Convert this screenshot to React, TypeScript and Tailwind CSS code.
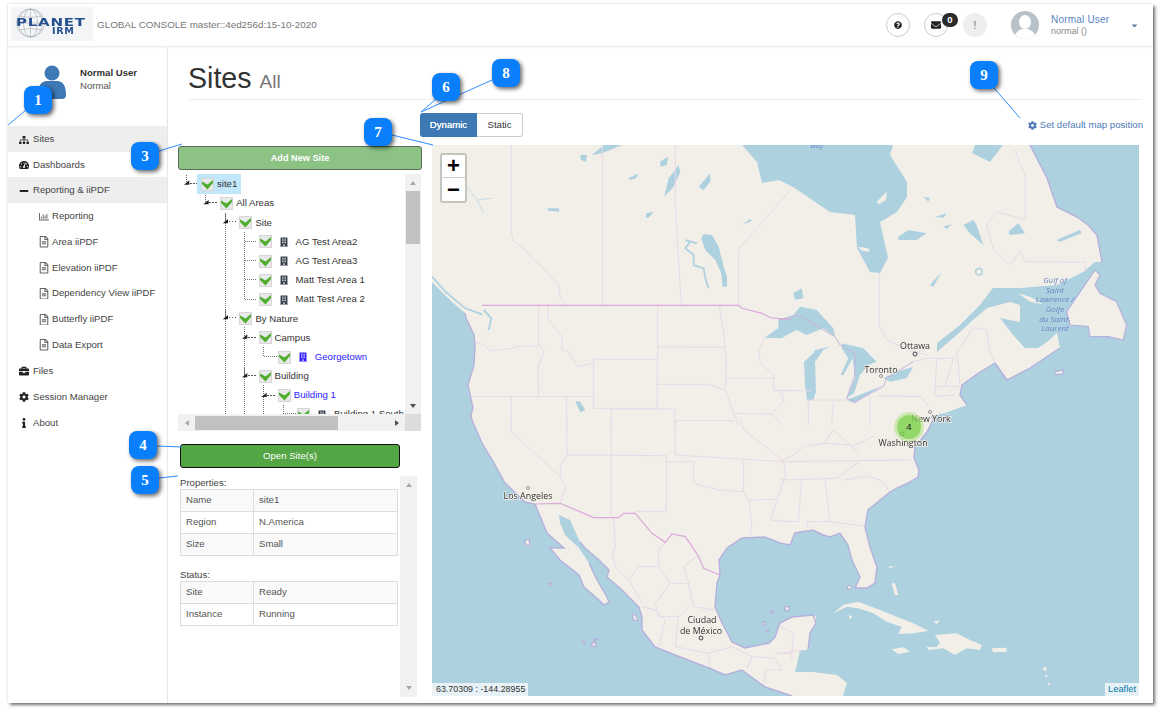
import React from "react";
import {
  FaBriefcase,
  FaBuilding,
  FaCaretDown,
  FaCog,
  FaEnvelope,
  FaInfo,
  FaMinus,
  FaQuestionCircle,
  FaRegChartBar,
  FaRegFileAlt,
  FaSitemap,
  FaTachometerAlt,
} from "react-icons/fa";

const LAND =
  "M432,145 L742,145 L757,162 L762,183 L779,180 L793,187 L830,212 L855,215 L857,248 L870,272 L880,273 L888,258 L880,222 L897,212 L907,197 L907,182 L890,155 L893,145 L975,145 L972,153 L990,162 L1003,145 L1030,145 L1047,178 L1057,207 L1077,217 L1088,225 L1097,235 L1102,262 L1095,262 L1083,272 L1057,285 L1020,288 L993,288 L980,305 L960,325 L937,343 L937,352 L960,332 L973,320 L987,308 L1010,302 L1020,305 L1020,322 L1000,318 L1013,335 L1025,348 L1038,348 L1047,342 L1057,333 L1060,348 L1030,368 L1007,380 L995,363 L980,372 L962,385 L960,395 L967,405 L945,413 L930,416 L933,420 L927,432 L915,447 L914,458 L919,470 L918,477 L908,483 L897,488 L890,492 L868,510 L865,527 L870,547 L877,567 L875,583 L867,588 L855,588 L860,577 L852,560 L848,545 L840,533 L830,537 L823,535 L813,530 L795,533 L790,545 L780,543 L765,537 L742,538 L727,548 L719,560 L720,575 L717,583 L715,607 L722,623 L732,642 L745,648 L769,643 L775,637 L780,623 L792,617 L800,616 L813,615 L816,617 L816,623 L810,633 L808,650 L800,650 L798,660 L795,672 L813,672 L837,675 L847,683 L843,696 L792,696 L765,687 L742,670 L725,675 L709,668 L675,655 L655,647 L642,630 L642,617 L639,607 L622,590 L607,577 L609,570 L599,560 L585,548 L580,542 L570,520 L559,515 L560,523 L565,535 L579,548 L589,563 L597,580 L607,597 L609,602 L604,605 L599,600 L584,587 L579,575 L560,560 L550,548 L564,548 L547,533 L535,504 L525,502 L505,483 L494,463 L482,443 L472,420 L471,415 L473,408 L468,385 L474,365 L475,345 L474,335 L466,318 L465,313 L452,302 L442,292 L432,282 Z";

const COAST =
  "M1102,262 L1097,235 L1088,225 L1077,217 L1057,207 L1047,178 L1030,145 M995,363 L1007,380 L1030,368 L1060,348 M995,363 L980,372 L962,385 L960,395 L967,405 M933,420 L927,432 L915,447 L914,458 L919,470 L918,477 L908,483 L897,488 L890,492 L868,510 L865,527 L870,547 L877,567 L875,583 L867,588 L855,588 L860,577 L852,560 L848,545 L840,533 L830,537 L823,535 L813,530 L795,533 L790,545 L780,543 L765,537 L742,538 L727,548 L719,560 L720,575 L717,583 L715,607 L722,623 L732,642 L745,648 L769,643 L775,637 L780,623 L792,617 L813,615 L816,623 L810,633 L808,650 M792,696 L765,687 L742,670 L725,675 L709,668 L675,655 L655,647 L642,630 L642,617 L639,607 L622,590 L607,577 L609,570 L599,560 L585,548 L580,542 M589,563 L597,580 L607,597 L609,602 L604,605 L599,600 L584,587 L579,575 L560,560 L550,548 L564,548 L547,533 L535,504 L525,502 L505,483 L494,463 L482,443 L472,420 L471,415 L473,408 L468,385 L474,365 L475,345 L474,335 L466,318 L465,313";

// lakes and inlets, traced in zoomed coordinates (3x) per map quadrant
const LAKES_NW = [
  "M480,30 L515,0 L570,0 L510,25 Z",
  "M445,30 L465,30 L462,50 L447,45 Z",
  "M685,50 L708,35 L705,60 L685,65 Z",
  "M710,100 L740,60 L745,80 L725,125 L697,155 Z",
  "M590,100 L620,85 L612,100 L592,105 Z",
  "M800,125 L835,85 L835,110 L815,135 Z",
  "M345,190 L380,190 L382,200 L350,197 Z",
  "M642,205 L665,200 L650,218 L642,218 Z",
  "M928,240 L955,222 L960,228 Z",
  "M808,280 L815,268 L840,270 L860,305 L878,375 L885,395 L885,425 L872,425 L868,385 L850,345 L820,315 Z",
  "M998,578 L1045,545 L1080,520 L1080,560 L1050,580 Z",
  "M430,768 L445,770 L460,795 L445,802 Z",
];

const THIN_WATER = [
  "M760,285 L795,295 M775,290 L760,310 L785,330 L785,360 L815,370 L820,400 L830,430",
  "M0,395 L40,440 L100,490 L150,508",
  "M155,495 L178,520 L170,555",
];

const LAKES_NE = [
  "M-5,525 L40,510 L60,485 L110,495 L160,550 L165,575 L130,550 L80,570 L50,555 L-5,580 Z",
  "M72,650 L100,625 L105,615 L150,605 L130,615 L105,650 L108,740 L100,765 L82,768 L75,720 Z",
  "M185,595 L250,610 L290,650 L265,660 L240,690 L222,745 L200,758 L225,700 L218,640 L190,690 L182,690 L205,640 L185,610 Z",
  "M200,765 L300,725 L310,720 L225,775 Z",
  "M310,700 L350,680 L400,665 L380,700 L330,710 Z",
  "M355,275 L385,255 L440,265 L410,285 L355,285 Z",
  "M465,215 L500,205 L490,218 Z",
  "M490,245 L515,238 L500,252 Z",
  "M550,240 L580,225 L590,240 L610,300 L570,265 Z",
  "M685,260 L715,235 L735,265 L690,270 Z",
  "M830,285 L900,255 L905,265 L840,290 Z",
  "M450,420 L485,380 L460,425 Z",
  "M430,155 L450,160 L445,170 Z",
  "M40,445 L65,430 L70,460 L45,465 Z",
];

const BORDERS_NW = [
  "M238,0 L238,260 L245,288 L285,320 L300,340 L330,365 L380,420 L385,455 L400,480",
  "M511,0 L511,480",
  "M730,0 L730,180 L748,480",
  "M920,480 L920,312 L1080,130",
  "M320,483 L320,603",
  "M130,592 L160,600 L175,618 L240,610 L265,603 L325,603 L335,620 L318,668 L320,755",
  "M347,483 L347,520 L390,575 L390,615 L410,620 L435,665 L485,655",
  "M120,755 L485,755",
  "M485,643 L675,643 L675,790 L485,790 L485,643",
  "M677,483 L677,643",
  "M677,605 L878,607",
  "M862,483 L878,580 L878,607 L883,640 L880,730",
  "M677,718 L830,718 L880,735 L905,805 L920,840",
  "M880,700 L1025,700",
  "M538,792 L728,792 L728,840",
  "M404,755 L404,840",
  "M238,755 L238,840",
  "M538,792 L538,840",
  "M730,827 L905,827",
  "M905,805 L1020,808",
  "M1000,575 L980,620 L985,655 L1025,690 L1025,735 L1050,745 L1055,770 L1020,805 L1050,840",
  "M1030,735 L1080,737",
];

const BORDERS_NE = [
  "M298,385 L298,540 L320,585 L400,620 L440,630",
  "M705,15 L735,90 L735,225 L650,200 L620,240 L640,310 L690,360 L720,320 L735,350 L915,352 L915,380",
  "M295,752 L425,755 L445,785",
  "M85,770 L85,840",
  "M160,770 L155,840",
  "M0,737 L95,737",
  "M85,765 L205,765",
  "M270,750 L270,840",
  "M470,640 L465,755",
  "M520,640 L495,725",
  "M533,630 L540,720",
  "M465,725 L540,725",
  "M465,755 L525,750",
  "M400,650 L440,640 L520,640 L580,548 L620,555 L630,620 L645,650",
];

const BORDERS_SW = [
  "M238,0 L238,35 L385,170",
  "M405,0 L405,105 L385,140 L385,170 L400,200 L385,250",
  "M405,105 L703,107 L703,275 L610,275",
  "M538,0 L538,290",
  "M730,0 L730,105 L1055,125 L1060,165 L1015,300 L1080,305",
  "M703,125 L785,125 L785,190 L860,210 L935,215 L950,240 L960,310 L955,345",
  "M935,125 L935,215",
  "M950,240 L1030,238",
  "M925,0 L935,30 L1060,125",
  "M545,295 L550,380 L540,405 L550,440 L590,480 L620,440 L680,440 L680,390 L700,367",
  "M590,480 L630,550",
  "M680,440 L715,490 L770,490 L755,440 L795,410",
  "M770,490 L785,560 L845,570",
  "M715,490 L670,550 L680,590 L740,590 L770,560",
  "M630,560 L670,570 L700,600 L680,680",
  "M740,590 L730,680 L830,700 L835,745",
  "M830,700 L900,680 L960,710 L945,745",
  "M960,710 L1030,715 L1050,750 L1000,750 L995,795",
  "M1030,700 L1080,700",
];

const BORDERS_SE = [
  "M0,125 L395,120",
  "M0,180 L170,175 L245,120",
  "M195,180 L260,168 L300,180 L330,215",
  "M135,178 L150,305",
  "M80,305 L150,305 L250,318",
  "M65,178 L55,305",
  "M80,305 L85,325",
  "M0,305 L55,305",
  "M0,125 L40,105 L70,80 L130,70 L160,30",
  "M130,70 L210,75 L235,95",
  "M160,30 L215,80 L280,50",
  "M0,620 L40,640 L35,720",
  "M0,700 L70,690",
];

const CARIBBEAN = [
  "M160,580 L190,555 L235,545 L300,570 L350,590 L400,610 L445,632 L400,640 L355,642 L365,620 L320,605 L280,580 L235,565 L200,560 Z",
  "M440,680 L470,682 L480,668 L465,645 L530,640 L570,660 L605,675 L600,690 L560,685 L525,705 L490,685 L445,690 Z",
  "M335,688 L370,682 L390,695 L355,702 Z",
  "M635,685 L680,683 L680,695 L640,697 Z",
  "M205,585 L218,590 L210,598 Z",
  "M335,490 L345,490 L355,525 L345,525 Z",
  "M325,440 L345,437 L330,445 Z",
  "M460,605 L480,600 L470,612 Z",
  "M787,745 L800,740 L798,755 Z",
  "M795,765 L802,765 L800,775 Z",
  "M802,788 L810,790 L808,800 Z",
];

const OUTLINED_ISLES = [
  "M280,360 L292,358 L293,375 L280,375 Z",
  "M352,490 L360,490 L358,497 L352,496 Z",
  "M600,583 L610,585 L618,600 L606,602 Z",
  "M452,663 L460,665 L458,672 L452,670 Z",
  "M480,668 L492,668 L490,680 L480,678 Z",
  "M484,658 L496,656 L488,664 Z",
  "M995,605 L1002,610 L998,618 L992,612 Z",
  "M1060,560 L1070,560 L1072,570 L1060,570 Z",
  "M1015,572 L1025,575 L1018,580 Z",
  "M1000,630 L1010,630 L1008,636 Z",
];

const WATER = "#aed1e0";
const GROUND = "#f2efe9";
const COAST_LINE = "#b5b1dc";
const STATE_LINE = "#e8d9e8";

function Lines({ list }: { list: string[] }) {
  return (
    <>
      {list.map((d) => (
        <path key={d} d={d} fill="none" stroke={STATE_LINE} strokeWidth="1" vectorEffect="non-scaling-stroke" />
      ))}
    </>
  );
}

function Fills({ list, color }: { list: string[]; color: string }) {
  return (
    <>
      {list.map((d) => (
        <path key={d} d={d} fill={color} strokeLinejoin="round" />
      ))}
    </>
  );
}

function MapLabel({ x, y, children }: { x: number; y: number; children: string }) {
  return (
    <text
      x={x}
      y={y}
      textAnchor="middle"
      fontSize="8.9"
      fill="#333"
      stroke={GROUND}
      strokeWidth="1.5"
      paintOrder="stroke"
      fontFamily="'Open Sans', sans-serif"
    >
      {children}
    </text>
  );
}

function MapArt() {
  return (
    <svg viewBox="432 145 707 551" className="block w-full h-full blur-[0.35px]">
      <rect x="432" y="145" width="707" height="551" fill={WATER} />
      <path d={LAND} fill={GROUND} />
      <g transform="translate(780 145) scale(0.3333)">
        {/* newfoundland and the islands in the gulf */}
        <path
          d="M945,375 L860,500 L870,540 L925,545 L930,575 L985,575 L1030,585 L1040,540 L1010,470 L960,445 L945,420 L960,390 Z"
          fill={GROUND}
          stroke={COAST_LINE}
          strokeWidth="1.2"
          vectorEffect="non-scaling-stroke"
        />
        <path d="M715,445 L750,455 L790,478 L750,470 Z" fill={GROUND} />
        <path d="M235,305 L265,310 L270,320 L245,318 Z" fill={GROUND} />
        <path d="M290,170 L320,140 L318,165 L298,178 Z" fill={GROUND} />
        <Fills list={LAKES_NE} color={WATER} />
        <circle cx="597" cy="380" r="10" fill="none" stroke={WATER} strokeWidth="5" />
        <path d="M825,680 L850,675 L848,688 L825,688 Z" fill={GROUND} stroke={COAST_LINE} strokeWidth="1.2" vectorEffect="non-scaling-stroke" />
        <Lines list={BORDERS_NE} />
        <path
          d="M-5,525 L55,510 L165,575 L180,600 L225,625 L225,690 L200,760 L225,770 L310,725 L320,700 L400,650"
          fill="none"
          stroke="#c9b3dc"
          strokeWidth="1"
          vectorEffect="non-scaling-stroke"
        />
      </g>
      <g transform="translate(432 145) scale(0.3333)">
        <Fills list={LAKES_NW} color={WATER} />
        {THIN_WATER.map((d) => (
          <path key={d} d={d} fill="none" stroke={WATER} strokeWidth="1.8" vectorEffect="non-scaling-stroke" />
        ))}
        <Lines list={BORDERS_NW} />
        <path
          d="M150,481 L920,481 L930,490 L990,505 L1015,518 L1080,525"
          fill="none"
          stroke="#dba9d9"
          strokeWidth="1.2"
          vectorEffect="non-scaling-stroke"
        />
        <path d="M105,125 L135,165 L155,205 M135,165 L180,160" fill="none" stroke="#c6dde6" strokeWidth="1" vectorEffect="non-scaling-stroke" />
      </g>
      <g transform="translate(432 420) scale(0.3333)">
        <Lines list={BORDERS_SW} />
        <path
          d="M310,252 L385,250 L485,293 L560,293 L575,280 L610,280 L660,340 L700,367 L720,342 L760,350 L800,410 L815,445 L865,465"
          fill="none"
          stroke="#dba9d9"
          strokeWidth="1.2"
          vectorEffect="non-scaling-stroke"
        />
        {OUTLINED_ISLES.map((d) => (
          <path key={d} d={d} fill={GROUND} stroke={COAST_LINE} strokeWidth="1.2" vectorEffect="non-scaling-stroke" />
        ))}
      </g>
      <g transform="translate(780 420) scale(0.3333)">
        <Lines list={BORDERS_SE} />
        <Fills list={CARIBBEAN} color={GROUND} />
        <circle cx="208" cy="502" r="6" fill={GROUND} stroke={COAST_LINE} strokeWidth="1.2" vectorEffect="non-scaling-stroke" />
        <path d="M16,560 L26,560 L28,572 L16,572 Z" fill={GROUND} stroke={COAST_LINE} strokeWidth="1.2" vectorEffect="non-scaling-stroke" />
      </g>
      <path d={COAST} fill="none" stroke={COAST_LINE} strokeWidth="1.4" />
      <circle cx="915" cy="354" r="2" fill="none" stroke="#444" />
      <circle cx="881" cy="376" r="1.5" fill="#fff" stroke="#666" strokeWidth="0.7" />
      <circle cx="930" cy="412" r="1.5" fill="#fff" stroke="#666" strokeWidth="0.7" />
      <circle cx="902" cy="434" r="2" fill="none" stroke="#444" />
      <circle cx="528" cy="488" r="1.5" fill="#fff" stroke="#666" strokeWidth="0.7" />
      <circle cx="701" cy="638" r="2" fill="none" stroke="#444" />
      <MapLabel x={915} y={349}>Ottawa</MapLabel>
      <MapLabel x={881} y={373}>Toronto</MapLabel>
      <MapLabel x={931} y={422}>New York</MapLabel>
      <MapLabel x={903} y={446}>Washington</MapLabel>
      <MapLabel x={528} y={499}>Los Angeles</MapLabel>
      <MapLabel x={702} y={623}>Ciudad</MapLabel>
      <MapLabel x={701} y={634}>de México</MapLabel>
      <g fontSize="8" fontStyle="italic" fill="#6a86c4" textAnchor="middle" fontFamily="'Open Sans', sans-serif">
        <text x="1055" y="283">Gulf of</text>
        <text x="1055" y="292.5">Saint</text>
        <text x="1055" y="302">Lawrence /</text>
        <text x="1055" y="312">Golfe</text>
        <text x="1055" y="321.5">du Saint-</text>
        <text x="1055" y="331">Laurent</text>
        <text x="817" y="148">Bay</text>
      </g>
    </svg>
  );
}

function Logo() {
  return (
    <div className="relative w-[82px] h-[34px] -mt-[2px] bg-[#f4f5f7] overflow-hidden">
      <svg viewBox="0 0 82 34" className="absolute inset-0 w-full h-full">
        <g fill="none" stroke="#a9adb2" strokeWidth="0.6">
          <circle cx="19.5" cy="16" r="14" />
          <ellipse cx="19.5" cy="16" rx="7" ry="14" />
          <ellipse cx="19.5" cy="16" rx="12" ry="14" />
          <path d="M19.5,2 L19.5,30 M5.5,16 L33.5,16 M7.5,9 Q19.5,12 31.5,9 M7.5,23 Q19.5,20 31.5,23" />
        </g>
      </svg>
      <span className="absolute left-[5px] top-[10px] text-[10px] leading-[12px] font-bold text-[#234f8e] font-['DejaVu_Sans',sans-serif] tracking-[0.5px] origin-left scale-x-[1.5]">
        PLANET
      </span>
      <span className="absolute left-[41px] top-[20px] text-[8px] leading-[10px] font-bold text-[#234f8e] font-['DejaVu_Sans',sans-serif] tracking-[0.5px] origin-left scale-x-[1.2]">
        IRM
      </span>
    </div>
  );
}

function Header() {
  return (
    <div className="flex items-center h-[43px] pl-[3px] pr-[14px] border-b border-[#ececec] shadow-[0_1px_2px_rgba(0,0,0,0.05)] bg-white">
      <Logo />
      <span className="ml-[4px] text-[9.85px] text-[#777]">GLOBAL CONSOLE master::4ed256d:15-10-2020</span>
      <div className="flex-1" />
      <div className="flex items-center justify-center w-[24px] h-[24px] rounded-full border border-[#ccc]">
        <FaQuestionCircle className="w-[8px] h-[8px] text-[#222]" />
      </div>
      <div className="relative flex items-center justify-center w-[24px] h-[24px] ml-[14px] rounded-full border border-[#ccc]">
        <FaEnvelope className="w-[10px] h-[10px] text-[#222]" />
        <span className="absolute -top-[1px] -right-[11px] flex items-center justify-center w-[16px] h-[14px] rounded-full bg-[#2b2b2b] text-[9.5px] font-bold text-white">
          0
        </span>
      </div>
      <div className="flex items-center justify-center w-[24px] h-[24px] ml-[15px] rounded-full bg-[#eeeeee] text-[10px] text-[#666]">
        !
      </div>
      <svg viewBox="0 0 28 28" className="w-[28px] h-[28px] ml-[24px]">
        <clipPath id="avatarClip">
          <circle cx="14" cy="14" r="14" />
        </clipPath>
        <g clipPath="url(#avatarClip)">
          <rect width="28" height="28" fill="#b9c1c8" />
          <ellipse cx="14" cy="11" rx="6" ry="7" fill="#fff" />
          <path d="M3,28 Q4,20 11,18 L17,18 Q24,20 25,28 Z" fill="#fff" />
        </g>
      </svg>
      <div className="flex flex-col ml-[12px] w-[70px]">
        <span className="text-[10px] leading-[12px] text-[#5b84c4] tracking-[0.2px]">Normal User</span>
        <span className="text-[9px] leading-[11px] text-[#888]">normal ()</span>
      </div>
      <FaCaretDown className="w-[9px] h-[9px] ml-[9px] text-[#5f7fa8]" />
    </div>
  );
}

const MENU_TOP = [
  { label: "Sites", icon: <FaSitemap />, active: true, h: "h-[26px]" },
  { label: "Dashboards", icon: <FaTachometerAlt />, active: false, h: "h-[25px]" },
  { label: "Reporting & iiPDF", icon: <FaMinus />, active: true, h: "h-[26px]" },
];

const MENU_SUB = [
  { label: "Reporting", icon: <FaRegChartBar /> },
  { label: "Area iiPDF", icon: <FaRegFileAlt /> },
  { label: "Elevation iiPDF", icon: <FaRegFileAlt /> },
  { label: "Dependency View iiPDF", icon: <FaRegFileAlt /> },
  { label: "Butterfly iiPDF", icon: <FaRegFileAlt /> },
  { label: "Data Export", icon: <FaRegFileAlt /> },
];

const MENU_BOTTOM = [
  { label: "Files", icon: <FaBriefcase /> },
  { label: "Session Manager", icon: <FaCog /> },
  { label: "About", icon: <FaInfo /> },
];

function Sidebar() {
  return (
    <div className="flex flex-col w-[160px] border-r border-[#e6e6e6] text-[9.6px] text-[#444]">
      <div className="flex h-[79px] pl-[29px] pt-[18px]">
        <svg viewBox="0 0 30 36" className="w-[30px] h-[36px] shrink-0">
          <circle cx="15" cy="8" r="7.5" fill="#3f79b5" />
          <path d="M1,30 Q1,17 9,16 L21,16 Q29,17 29,30 Q29,34 25,34 L5,34 Q1,34 1,30 Z" fill="#3f79b5" />
        </svg>
        <div className="flex flex-col ml-[13px] mt-[1px] leading-[13px]">
          <span className="font-bold text-[#333]">Normal User</span>
          <span className="text-[#555]">Normal</span>
        </div>
      </div>
      {MENU_TOP.map((m) => (
        <div key={m.label} className={`flex items-center pl-[11px] pt-[1px] gap-[4px] ${m.h} ${m.active ? "bg-[#eeeeee]" : ""}`}>
          <span className="flex justify-center w-[10px] text-[10px] text-[#222]">{m.icon}</span>
          {m.label}
        </div>
      ))}
      {MENU_SUB.map((m) => (
        <div key={m.label} className="flex items-center h-[25.75px] pl-[31px] pt-[1px] gap-[3px]">
          <span className="flex justify-center w-[10px] text-[11.5px] text-[#666]">{m.icon}</span>
          {m.label}
        </div>
      ))}
      {MENU_BOTTOM.map((m) => (
        <div key={m.label} className="flex items-center h-[26px] pl-[11px] pt-[1px] gap-[4px]">
          <span className="flex justify-center w-[10px] text-[10px] text-[#222]">{m.icon}</span>
          {m.label}
        </div>
      ))}
    </div>
  );
}

function Check() {
  return (
    <svg viewBox="0 0 13 13" className="w-[13px] h-[13px] shrink-0">
      <rect x="0.5" y="0.5" width="12" height="12" fill="#e9e9e9" stroke="#d6d6d6" />
      <path d="M1,3.5 L6.5,6.5 L12,2 L12,5 L6.5,11.5 L1,6 Z" fill="#4fae2e" />
    </svg>
  );
}

type TreeNode = { label: string; depth: number; area?: boolean; link?: boolean; selected?: boolean };

const TREE: TreeNode[] = [
  { label: "site1", depth: 0, selected: true },
  { label: "All Areas", depth: 1 },
  { label: "Site", depth: 2 },
  { label: "AG Test Area2", depth: 3, area: true },
  { label: "AG Test Area3", depth: 3, area: true },
  { label: "Matt Test Area 1", depth: 3, area: true },
  { label: "Matt Test Area 2", depth: 3, area: true },
  { label: "By Nature", depth: 2 },
  { label: "Campus", depth: 3 },
  { label: "Georgetown", depth: 4, area: true, link: true },
  { label: "Building", depth: 3 },
  { label: "Building 1", depth: 4, link: true },
  { label: "Building 1 South", depth: 5, area: true },
];

function TreeLines() {
  const carets = [
    [50, 40],
    [108, 99],
    [166, 156],
    [166, 444],
    [224, 502],
    [224, 618],
    [282, 677],
  ];
  const dotted = [
    "M166,130 L166,735",
    "M224,185 L224,388 L262,388",
    "M224,215 L262,215 M224,272 L262,272 M224,328 L262,328",
    "M224,470 L224,735",
    "M282,530 L282,560 L320,560",
    "M282,645 L282,735",
    "M340,705 L340,735 M340,731 L378,731",
  ];
  return (
    <svg viewBox="178 174 227 240" className="absolute left-0 top-0 w-[227px] h-[240px]">
      <g transform="translate(170 170) scale(0.3333)">
        {dotted.map((d) => (
          <path key={d} d={d} fill="none" stroke="#777" strokeWidth="3" strokeDasharray="3 3" shapeRendering="crispEdges" />
        ))}
        {carets.map(([x, y]) => (
          <g key={`${x}-${y}`}>
            <path d={`M${x},${y - 25} L${x},${y}`} stroke="#666" strokeWidth="3" strokeDasharray="3 3" shapeRendering="crispEdges" />
            <path d={`M${x + 10},${y} L${x + 35},${y}`} stroke="#555" strokeWidth="3" strokeDasharray="5 4" shapeRendering="crispEdges" />
            <path d={`M${x - 8},${y + 4} L${x + 8},${y + 4} L${x + 8},${y - 9} Z`} fill="#222" />
          </g>
        ))}
      </g>
    </svg>
  );
}

function ScrollArrow({ dir, tone }: { dir: "up" | "down" | "left" | "right"; tone: string }) {
  const d = {
    up: "M1,6 L4,2 L7,6 Z",
    down: "M1,2 L4,6 L7,2 Z",
    left: "M6,1 L2,4 L6,7 Z",
    right: "M2,1 L6,4 L2,7 Z",
  }[dir];
  return (
    <svg viewBox="0 0 8 8" className="w-[8px] h-[8px]">
      <path d={d} fill={tone} />
    </svg>
  );
}

function SiteTree() {
  return (
    <div className="relative mt-[4px] h-[257px] w-[243px] overflow-hidden text-[9.6px] text-[#333]">
      <div className="relative w-[227px] h-[240px] overflow-hidden">
        <TreeLines />
        <div className="relative flex flex-col">
          {TREE.map((n) => (
            <div
              key={n.label}
              className="flex items-center h-[19.2px] whitespace-nowrap first:h-[20px]"
              style={{ paddingLeft: 19 + n.depth * 19.2 }}
            >
              <span className={`flex items-center h-[20px] pl-[4px] pr-[4px] ${n.selected ? "bg-[#c2e7fb]" : ""}`}>
                <Check />
                {n.area ? (
                  <>
                    <FaBuilding className={`w-[8px] h-[10px] ml-[8px] ${n.link ? "text-[#2a1aff]" : "text-[#333b48]"}`} />
                    <span className={`ml-[8px] ${n.link ? "text-[#2a1aff]" : ""}`}>{n.label}</span>
                  </>
                ) : (
                  <span className={`ml-[3px] ${n.link ? "text-[#2a1aff]" : ""}`}>{n.label}</span>
                )}
              </span>
            </div>
          ))}
        </div>
      </div>
      {/* vertical scrollbar */}
      <div className="absolute left-[227px] top-0 flex flex-col items-center w-[16px] h-[240px] bg-[#f1f1f1]">
        <div className="flex items-center justify-center h-[17px]">
          <ScrollArrow dir="up" tone="#a8a8a8" />
        </div>
        <div className="w-[14px] h-[53px] bg-[#c1c1c1]" />
        <div className="flex-1" />
        <div className="flex items-center justify-center h-[17px]">
          <ScrollArrow dir="down" tone="#505050" />
        </div>
      </div>
      {/* horizontal scrollbar */}
      <div className="absolute left-0 top-[240px] flex items-center w-[227px] h-[17px] bg-[#f1f1f1]">
        <div className="flex items-center justify-center w-[17px]">
          <ScrollArrow dir="left" tone="#a8a8a8" />
        </div>
        <div className="w-[143px] h-[14px] bg-[#c1c1c1]" />
        <div className="flex-1" />
        <div className="flex items-center justify-center w-[17px]">
          <ScrollArrow dir="right" tone="#505050" />
        </div>
      </div>
      <div className="absolute left-[227px] top-[240px] w-[16px] h-[17px] bg-[#dcdcdc]" />
    </div>
  );
}

function InfoTable({ rows }: { rows: string[][] }) {
  return (
    <table className="w-[218px] border-collapse table-fixed text-[9.6px] text-[#555]">
      <tbody>
        {rows.map(([k, v], i) => (
          <tr key={k} className={`h-[22px] ${i % 2 === 0 ? "bg-[#f9f9f9]" : ""}`}>
            <td className="w-[73px] px-[5px] py-0 border border-[#dddddd]">{k}</td>
            <td className="px-[5px] py-0 border border-[#dddddd]">{v}</td>
          </tr>
        ))}
      </tbody>
    </table>
  );
}

function LeftColumn() {
  return (
    <div className="flex flex-col w-[244px] pt-[1px]">
      <button className="h-[24px] w-[244px] pt-[1px] rounded-[3px] border border-[#5c6b58] bg-[#8cc385] text-[9.2px] font-bold text-white">
        Add New Site
      </button>
      <SiteTree />
      <button className="h-[24px] w-[220px] mt-[13px] ml-[2px] rounded-[3px] border border-[#111] bg-[#54a543] text-[9.6px] text-white">
        Open Site(s)
      </button>
      <div className="flex mt-[8px] ml-[2px] h-[221px]">
        <div className="flex flex-col w-[220px] text-[9.6px] text-[#444]">
          <div className="h-[13px] leading-[14px]">Properties:</div>
          <InfoTable
            rows={[
              ["Name", "site1"],
              ["Region", "N.America"],
              ["Size", "Small"],
            ]}
          />
          <div className="h-[13px] mt-[12px] leading-[14px]">Status:</div>
          <InfoTable
            rows={[
              ["Site", "Ready"],
              ["Instance", "Running"],
            ]}
          />
        </div>
        <div className="flex flex-col items-center justify-between w-[17px] py-[5px] bg-[#f1f1f1]">
          <ScrollArrow dir="up" tone="#a8a8a8" />
          <ScrollArrow dir="down" tone="#a8a8a8" />
        </div>
      </div>
    </div>
  );
}

function MapPanel() {
  return (
    <div className="relative w-[707px] h-[551px] overflow-hidden">
      <MapArt />
      <div className="absolute left-[8px] top-[8px] flex flex-col w-[27px] h-[50px] rounded-[3px] border-2 border-[#c4c4bf] bg-white text-black overflow-hidden">
        <div className="flex items-center justify-center h-[24px] border-b border-[#ccc] text-[22px] leading-none font-bold">+</div>
        <div className="flex items-center justify-center h-[24px] text-[22px] leading-none font-bold">−</div>
      </div>
      <div className="absolute left-0 bottom-0 h-[13px] w-[96px] pl-[4px] bg-white/70 text-[8.9px] leading-[13px] text-[#333]">
        63.70309 : -144.28955
      </div>
      <div className="absolute right-0 bottom-0 h-[13px] px-[3px] bg-white/70 text-[9.3px] leading-[13px] text-[#0078a8]">
        Leaflet
      </div>
      {/* marker cluster */}
      <div className="absolute left-[462px] top-[267px] flex items-center justify-center w-[30px] h-[30px] rounded-full bg-[#b5e28c]/60">
        <div className="flex items-center justify-center w-[24px] h-[24px] rounded-full bg-[#6ecc39]/60 text-[9.6px] text-[#222]">
          4
        </div>
      </div>
    </div>
  );
}

const BADGES = [
  { n: "1", pos: "left-[24px] top-[86px]" },
  { n: "3", pos: "left-[131px] top-[142px]" },
  { n: "4", pos: "left-[129px] top-[431px]" },
  { n: "5", pos: "left-[131px] top-[466px]" },
  { n: "6", pos: "left-[432px] top-[73px]" },
  { n: "7", pos: "left-[364px] top-[118px]" },
  { n: "8", pos: "left-[492px] top-[59px]" },
  { n: "9", pos: "left-[970px] top-[61px]" },
];

function Callouts() {
  const lines = [
    "M8,125 L26,110",
    "M159,151 L182,144",
    "M392,135 L433,145",
    "M436,99 L421,112",
    "M492,80 L421,112",
    "M994,88 L1020,118",
    "M157,446 L182,447",
    "M159,478 L178,476",
  ];
  return (
    <>
      <svg viewBox="0 0 1161 712" className="absolute inset-0 w-[1161px] h-[712px] pointer-events-none">
        {lines.map((d) => (
          <path key={d} d={d} stroke="#2e8fff" strokeWidth="1" fill="none" />
        ))}
      </svg>
      {BADGES.map((b) => (
        <div
          key={b.n}
          className={`absolute ${b.pos} flex items-center justify-center w-[28px] h-[28px] rounded-[8px] bg-[#0a7ffb] shadow-[2px_2px_4px_rgba(0,0,0,0.6)] text-[15px] font-bold text-white font-['Liberation_Serif',serif]`}
        >
          {b.n}
        </div>
      ))}
    </>
  );
}

export default function App() {
  return (
    <div className="relative w-[1161px] h-[712px] overflow-hidden bg-white pl-[8px] pt-[4px] font-['Liberation_Sans',Arial,sans-serif]">
      <div className="flex flex-col w-[1145px] h-[699px] bg-white shadow-[2px_2px_3px_rgba(0,0,0,0.55),-1px_-1px_2px_rgba(0,0,0,0.06)]">
        <Header />
        <div className="flex flex-1 min-h-0">
          <Sidebar />
          <div className="flex flex-col flex-1 pl-[20px] pr-[11px]">
            <div className="flex items-baseline h-[53px] pt-[11px] border-b border-[#eeeeee]">
              <h1 className="text-[28.6px] leading-[40px] text-[#333]">Sites</h1>
              <span className="ml-[8px] text-[19px] text-[#777]">All</span>
            </div>
            <div className="flex items-start h-[45px] pt-[13px] pl-[232px]">
              <div className="flex text-[9.6px]">
                <div className="flex items-center justify-center w-[57px] h-[24px] rounded-l-[3px] bg-[#3f79b5] text-white [text-shadow:0_0_0.6px_#fff]">
                  Dynamic
                </div>
                <div className="flex items-center justify-center w-[46px] h-[24px] rounded-r-[3px] border border-[#cccccc] border-l-0 text-[#333]">
                  Static
                </div>
              </div>
              <div className="flex-1" />
              <div className="flex items-center gap-[3px] h-[24px] -mr-[1px] text-[9.65px] text-[#4f7ab8]">
                <FaCog className="w-[9px] h-[9px]" />
                Set default map position
              </div>
            </div>
            <div className="flex -ml-[10px] gap-[10px]">
              <LeftColumn />
              <MapPanel />
            </div>
          </div>
        </div>
      </div>
      <Callouts />
    </div>
  );
}
